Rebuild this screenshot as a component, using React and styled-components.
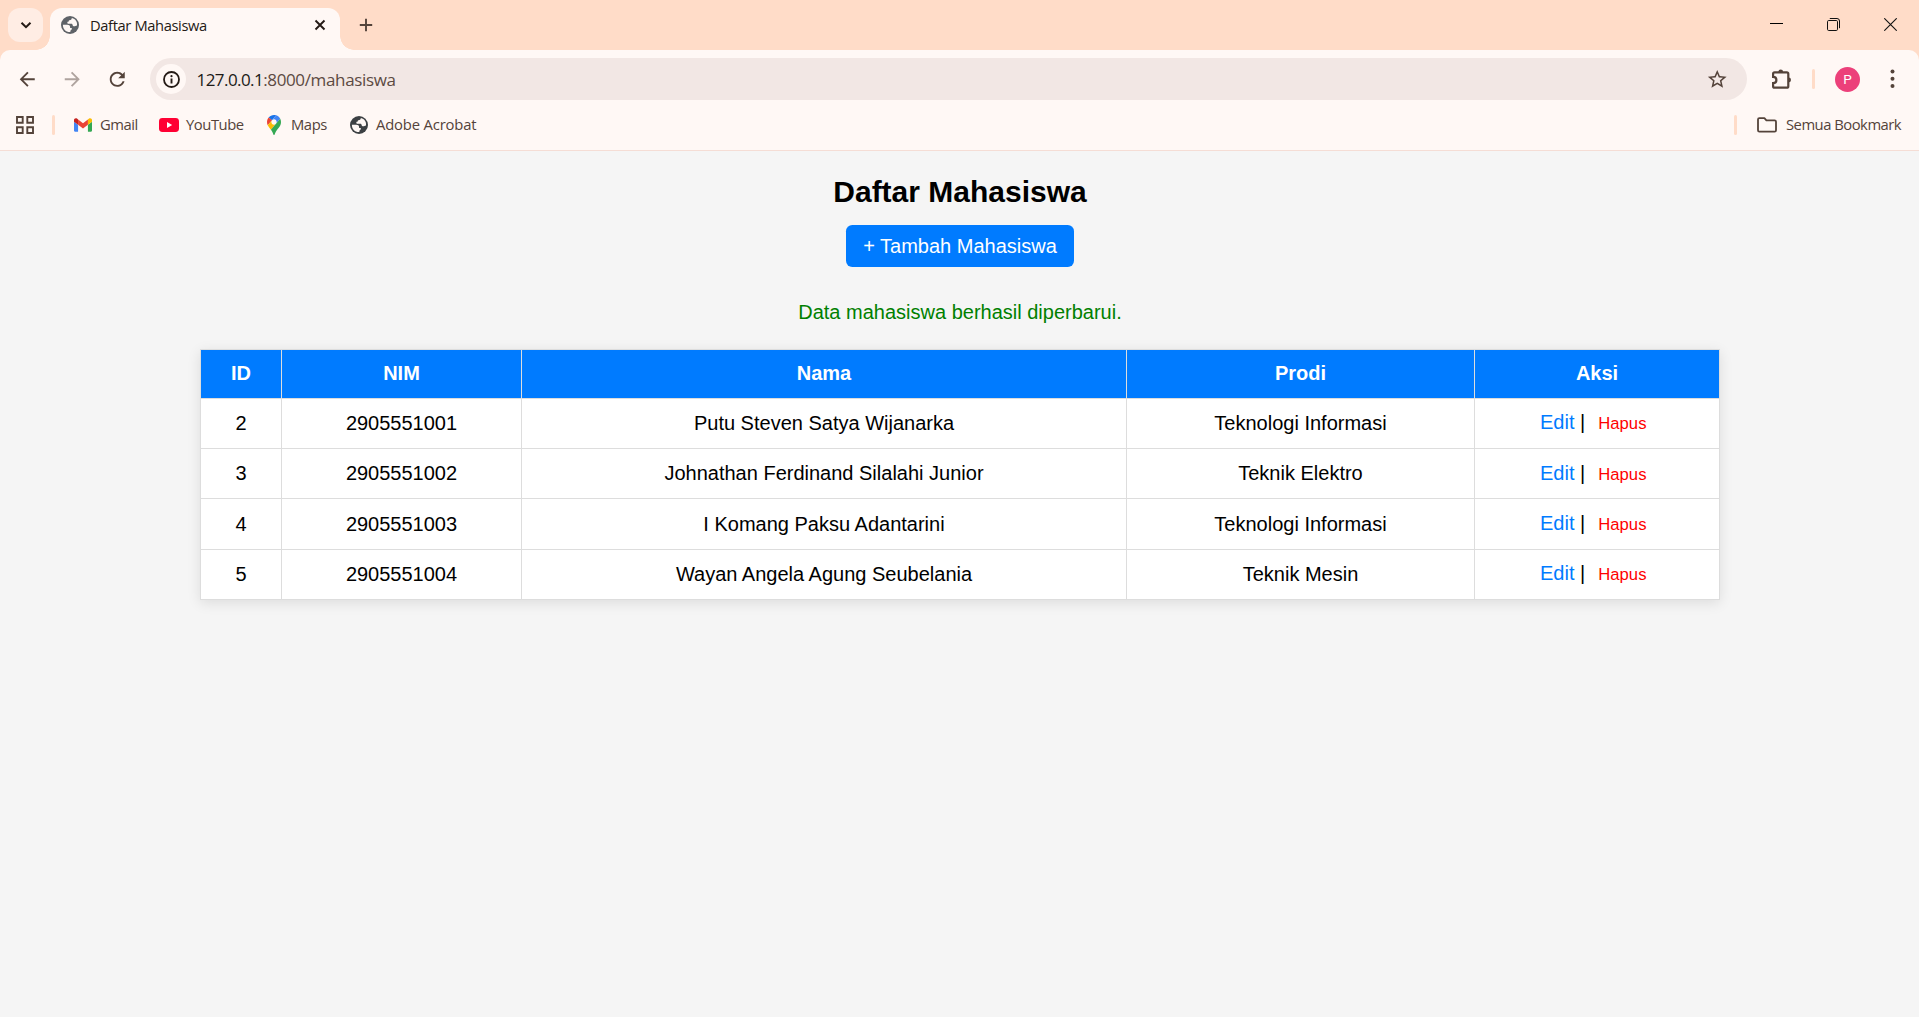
import React from "react";
import styled, { createGlobalStyle } from "styled-components";

const GlobalStyle = createGlobalStyle`
  * { box-sizing: border-box; }
  body {
    margin: 0;
    background: #f5f5f5;
    font-family: "Liberation Sans", Arial, sans-serif;
    overflow: hidden;
  }
  svg { display: block; flex: none; }
`;

const ui = `"Open Sans", "Noto Sans", sans-serif`;
const strip = "#ffdcc8";
const surface = "#fff8f5";
const ink = "#54433a";

const Window = styled.div`
  display: flex;
  flex-direction: column;
  height: 1017px;
  font-size: 20px;
`;

/* ---------- tab strip ---------- */
const TabStrip = styled.div`
  display: flex;
  align-items: flex-start;
  height: 50px;
  padding: 8px 0 0 8px;
  background: ${strip};
`;

const TabSearch = styled.div`
  display: flex;
  align-items: center;
  justify-content: center;
  width: 35px;
  height: 34px;
  border-radius: 12px;
  background: #ffede4;
`;

const Tab = styled.div`
  position: relative;
  display: flex;
  align-items: center;
  width: 290px;
  height: 42px;
  margin-left: 7px;
  padding: 0 12px 8px 10.5px;
  border-radius: 12px 12px 0 0;
  background: ${surface};

  &::before,
  &::after {
    content: "";
    position: absolute;
    bottom: 0;
    width: 14px;
    height: 14px;
  }
  &::before {
    left: -14px;
    background: radial-gradient(circle at 0 0, transparent 13.5px, ${surface} 14px);
  }
  &::after {
    right: -14px;
    background: radial-gradient(circle at 100% 0, transparent 13.5px, ${surface} 14px);
  }
`;

const TabTitle = styled.span`
  flex: 1;
  margin-left: 11.5px;
  font: 14.7px/20px ${ui};
  letter-spacing: -0.37px;
  color: #241a15;
  white-space: nowrap;
`;

const NewTab = styled.div`
  display: flex;
  align-items: center;
  height: 34px;
  margin-left: 18px;
`;

const WindowButtons = styled.div`
  display: flex;
  margin-left: auto;
`;

const WindowButton = styled.div`
  display: flex;
  align-items: center;
  justify-content: center;
  width: 57px;
  height: 33px;
`;

/* ---------- toolbar ---------- */
const ToolbarBacking = styled.div`
  background: ${strip};
`;

const Toolbar = styled.div`
  display: flex;
  align-items: center;
  height: 58px;
  padding: 0 15px 0 5px;
  border-radius: 10px 10px 0 0;
  background: ${surface};
`;

const NavButton = styled.div`
  display: flex;
  align-items: center;
  justify-content: center;
  width: 45px;
  height: 42px;
`;

const AddressBar = styled.div`
  display: flex;
  align-items: center;
  flex: 1;
  height: 42px;
  margin-left: 10px;
  padding: 0 18.5px 0 6px;
  border-radius: 21px;
  background: #f2e7e4;
`;

const SiteInfo = styled.div`
  display: flex;
  align-items: center;
  justify-content: center;
  width: 30px;
  height: 30px;
  border-radius: 50%;
  background: ${surface};
`;

const Url = styled.span`
  flex: 1;
  margin-left: 10.5px;
  padding-top: 2px;
  font: 17px/24px ${ui};
  letter-spacing: -0.36px;
  color: #5c4a42;
  white-space: nowrap;
`;

const Host = styled.span`
  letter-spacing: -0.56px;
  color: #201a17;
`;

const ToolbarActions = styled.div`
  display: flex;
  align-items: center;
  width: 157px;
  padding-left: 23px;
`;

const Divider = styled.div`
  width: ${(p) => p.$width}px;
  height: 20px;
  margin: 0 ${(p) => p.$after}px 0 ${(p) => p.$before}px;
  border-radius: 2px;
  background: ${strip};
`;

const Avatar = styled.div`
  display: flex;
  align-items: center;
  justify-content: center;
  width: 25px;
  height: 25px;
  margin-right: 30px;
  border-radius: 50%;
  background: #ec407a;
  color: #fff;
  font: 13.5px/25px Roboto, sans-serif;
`;

/* ---------- bookmarks ---------- */
const BookmarkBar = styled.div`
  display: flex;
  align-items: center;
  height: 43px;
  padding: 0 16px 8px 15.5px;
  border-bottom: 1px solid #f5ddd5;
  background: ${surface};
`;

const Bookmark = styled.div`
  display: flex;
  align-items: center;
  gap: ${(p) => p.$gap ?? 7.5}px;
  width: ${(p) => (p.$width ? `${p.$width}px` : "auto")};
`;

const BookmarkIcon = styled.span`
  display: flex;
  justify-content: center;
  width: 20px;
`;

const BookmarkLabel = styled.span`
  padding-bottom: 3px;
  font: 14.8px/20px ${ui};
  letter-spacing: ${(p) => p.$tracking ?? -0.45}px;
  color: ${ink};
  white-space: nowrap;
`;

const Spacer = styled.div`
  flex: 1;
`;

/* ---------- page ---------- */
const Page = styled.main`
  display: flex;
  flex-direction: column;
  align-items: center;
  flex: 1;
  padding: 24px 0 0 1px;
  background: #f5f5f5;
`;

const Title = styled.h2`
  margin: 0;
  font-size: 30px;
  line-height: 34px;
`;

const AddLink = styled.a`
  display: flex;
  align-items: center;
  justify-content: center;
  width: 228px;
  height: 42px;
  margin-top: 16px;
  border-radius: 6.25px;
  background: #007bff;
  color: #fff;
`;

const Message = styled.p`
  margin: 34px 0 25px;
  line-height: 23px;
  color: green;
`;

const Table = styled.table`
  width: 1520px;
  table-layout: fixed;
  border-collapse: collapse;
  background: #fff;
  box-shadow: 0 2.5px 12.5px rgba(0, 0, 0, 0.1);
`;

const Col = styled.col`
  width: ${(p) => p.$width}px;
`;

const Row = styled.tr`
  height: ${(p) => p.$height ?? 50}px;
`;

const HeadCell = styled.th`
  padding: 0 0 2px;
  border: 1px solid #ddd;
  background: #007bff;
  color: #fff;
  line-height: 23px;
  text-align: center;
`;

const Cell = styled.td`
  padding: 0;
  border: 1px solid #ddd;
  line-height: 23px;
  text-align: center;
`;

const ActionCell = styled(Cell)`
  padding-bottom: ${(p) => p.$lift ?? 2}px;
`;

const EditLink = styled.a`
  color: #007bff;
`;

const DeleteButton = styled.button`
  padding: 0 7.5px;
  border: none;
  background: none;
  color: red;
  font: 16.67px/19px "Liberation Sans", Arial, sans-serif;
`;

/* ---------- icons ---------- */
const Globe = ({ color }) => (
  <svg width="18" height="18" viewBox="0 0 18 18">
    <circle cx="9" cy="9" r="9" fill={color} />
    <path
      d="M1.9 8.7h4.300c1.800 0 2.900.8 2.900 2.300v1h1.700v1.500c-.9.2-1.400.7-1.500 2.600-4.100.3-7.500-2.900-7.400-7.400z"
      fill={surface}
    />
    <path
      d="M10.900 2.100c-.4 1.600-1 2.100-2.300 2.200-.6 0-.9.5-.9 1.200-.9.100-1.400.5-1.400 1.200 0 .8.600 1 1.500 1h2.400c.9 0 1.300.5 1.400 1.300.1.900.7 1.300 1.700 1.300.9 0 1.300-.9 2.700-.9.5-3.600-1.500-6.400-5.100-7.300z"
      fill={surface}
    />
  </svg>
);

const Material = ({ d, size = 22.5, color = ink }) => (
  <svg width={size} height={size} viewBox="0 0 24 24" fill={color}>
    <path d={d} />
  </svg>
);

const BACK = "M20 11H7.830l5.590-5.590L12 4l-8 8 8 8 1.410-1.410L7.830 13H20v-2z";
const FORWARD = "M12 4l-1.410 1.410L16.170 11H4v2h12.170l-5.580 5.590L12 20l8-8z";
const RELOAD =
  "M17.650 6.350C16.200 4.900 14.210 4 12 4c-4.420 0-7.990 3.580-7.990 8s3.570 8 7.990 8c3.730 0 6.840-2.550 7.730-6h-2.080c-.82 2.330-3.040 4-5.650 4-3.310 0-6-2.690-6-6s2.690-6 6-6c1.660 0 3.140.690 4.220 1.780L13 11h7V4l-2.350 2.350z";
const STAR =
  "M22 9.240l-7.190-.620L12 2 9.190 8.630 2 9.240l5.460 4.730L5.820 21 12 17.270 18.180 21l-1.630-7.030L22 9.240zM12 15.400l-3.760 2.270 1-4.280-3.320-2.880 4.380-.380L12 6.100l1.710 4.040 4.380.380-3.320 2.880 1 4.280L12 15.400z";

const Chevron = () => (
  <svg width="12" height="12" viewBox="0 0 12 12" fill="none" stroke="#241a15" strokeWidth="2">
    <path d="M1.500 3.700L6 8.200l4.500-4.500" />
  </svg>
);

const TabClose = () => (
  <svg width="16" height="16" viewBox="0 0 16 16" stroke="#241a15" strokeWidth="1.900">
    <path d="M3.500 3.500l9 9M12.500 3.500l-9 9" />
  </svg>
);

const Plus = () => (
  <svg width="16" height="16" viewBox="0 0 16 16" stroke={ink} strokeWidth="1.900">
    <path d="M8 1.800v12.400M1.800 8h12.400" />
  </svg>
);

const Minimize = () => (
  <svg width="13" height="13" viewBox="0 0 13 13" stroke="#000">
    <path d="M0 5.500h13" />
  </svg>
);

const Restore = () => (
  <svg width="13" height="13" viewBox="0 0 13 13" fill="none" stroke="#111">
    <rect x=".5" y="2.500" width="10" height="10" rx="1.200" />
    <path d="M2.800.5h7.200a2.500 2.500 0 0 1 2.500 2.500v7.200" />
  </svg>
);

const WindowClose = () => (
  <svg width="13" height="13" viewBox="0 0 13 13" stroke="#111" strokeWidth="1.100">
    <path d="M.3.300l12.400 12.400M12.700.300L.3 12.700" />
  </svg>
);

const Info = () => (
  <svg width="17" height="17" viewBox="0 0 17 17">
    <circle cx="8.500" cy="8.500" r="7.500" fill="none" stroke="#241a15" strokeWidth="1.800" />
    <path d="M8.500 7.500v5" stroke="#241a15" strokeWidth="1.900" />
    <circle cx="8.500" cy="5.200" r="1.100" fill="#241a15" />
  </svg>
);

const Puzzle = () => (
  <svg width="24" height="24" viewBox="0 0 24 24">
    <path
      d="M4.600 5.300h12.200c.9 0 1.500.6 1.500 1.500v12.400c0 .9-.6 1.500-1.500 1.500H4.600c-.9 0-1.500-.6-1.500-1.500v-3c1.900 0 3.300-1.300 3.300-3.200S5 9.800 3.100 9.800v-3c0-.9.600-1.500 1.500-1.500z"
      fill="none"
      stroke={ink}
      strokeWidth="2.200"
    />
    <path d="M8.300 5a2.400 2.400 0 0 1 4.800 0zM18.600 10.600a2.400 2.400 0 0 1 0 4.800z" fill={ink} />
  </svg>
);

const Dots = () => (
  <svg width="5" height="20" viewBox="0 0 5 20" fill={ink}>
    <circle cx="2.500" cy="2.500" r="2" />
    <circle cx="2.500" cy="9.700" r="2" />
    <circle cx="2.500" cy="16.900" r="2" />
  </svg>
);

const Apps = () => (
  <svg width="18" height="18" viewBox="0 0 18 18" fill="none" stroke={ink} strokeWidth="1.900">
    <path d="M1 1h5.700v5.700H1zM11.300 1H17v5.700h-5.700zM1 11.300h5.700V17H1zM11.300 11.300H17V17h-5.700z" />
  </svg>
);

const Folder = () => (
  <svg width="20" height="16" viewBox="0 0 20 16" fill="none" stroke={ink} strokeWidth="1.800">
    <path
      d="M2.400 1.200h5l2 2.200h8.200c.9 0 1.400.6 1.400 1.400v8.400c0 .9-.6 1.400-1.400 1.400H2.400c-.9 0-1.400-.6-1.400-1.400V2.600c0-.9.6-1.400 1.400-1.400z"
      strokeLinejoin="round"
    />
  </svg>
);

const Gmail = () => (
  <svg width="18" height="14" viewBox="52 42 88 66">
    <path fill="#4285f4" d="M58 108h14V74L52 59v43c0 3.320 2.690 6 6 6" />
    <path fill="#34a853" d="M120 108h14c3.320 0 6-2.690 6-6V59l-20 15" />
    <path fill="#fbbc04" d="M120 48v26l20-15v-8c0-7.420-8.470-11.650-14.400-7.200" />
    <path fill="#ea4335" d="M72 74V48l24 18 24-18v26L96 92" />
    <path fill="#c5221f" d="M52 51v8l20 15V48l-5.600-4.200c-5.940-4.450-14.400-.220-14.400 7.200" />
  </svg>
);

const YouTube = () => (
  <svg width="20" height="14" viewBox="0 0 20 14">
    <rect width="20" height="14" rx="3.400" fill="#ff0033" />
    <path d="M8 4l5.200 3L8 10z" fill="#fff" />
  </svg>
);

const Maps = () => (
  <svg width="14" height="20" viewBox="0 0 92.300 132.300">
    <path fill="#1a73e8" d="M60.200 2.200C55.800.8 51 0 46.100 0 32 0 19.300 6.400 10.800 16.500l21.800 18.300L60.200 2.200z" />
    <path fill="#ea4335" d="M10.800 16.500C4.100 24.500 0 34.900 0 46.100c0 8.700 1.700 15.700 4.600 22l28-33.300-21.800-18.300z" />
    <path fill="#4285f4" d="M46.200 28.500c9.800 0 17.700 7.900 17.700 17.700 0 4.300-1.600 8.300-4.200 11.400 0 0 13.900-16.600 27.500-32.700-5.600-10.800-15.300-19-27-22.700L32.600 34.800c3.300-3.800 8.100-6.300 13.600-6.300" />
    <path fill="#fbbc04" d="M46.200 63.800c-9.800 0-17.700-7.900-17.700-17.700 0-4.300 1.500-8.300 4.100-11.300l-28 33.300c4.800 10.600 12.800 19.200 21 29.900l34.100-40.500c-3.300 3.900-8.100 6.300-13.500 6.300" />
    <path fill="#34a853" d="M59.100 109.200c15.400-24.100 33.300-35 33.300-63 0-7.700-1.900-14.900-5.200-21.300L25.600 98c2.600 3.400 5.300 7.300 7.900 11.300 9.400 14.500 6.800 23.100 12.800 23.100s3.400-8.700 12.800-23.200" />
  </svg>
);

const bookmarks = [
  { label: "Gmail", icon: <Gmail />, width: 86 },
  { label: "YouTube", icon: <YouTube />, width: 105 },
  { label: "Maps", icon: <Maps />, width: 85 },
  { label: "Adobe Acrobat", icon: <Globe color="#3c4043" />, tracking: -0.16 },
];

const columns = [
  ["ID", 81],
  ["NIM", 240],
  ["Nama", 605],
  ["Prodi", 348],
  ["Aksi", 245],
];

const students = [
  { id: 2, nim: "2905551001", name: "Putu Steven Satya Wijanarka", major: "Teknologi Informasi" },
  { id: 3, nim: "2905551002", name: "Johnathan Ferdinand Silalahi Junior", major: "Teknik Elektro", lift: 0 },
  { id: 4, nim: "2905551003", name: "I Komang Paksu Adantarini", major: "Teknologi Informasi", height: 51 },
  { id: 5, nim: "2905551004", name: "Wayan Angela Agung Seubelania", major: "Teknik Mesin" },
];

export default function App() {
  return (
    <Window>
      <GlobalStyle />
      <TabStrip>
        <TabSearch><Chevron /></TabSearch>
        <Tab>
          <Globe color="#5f6368" />
          <TabTitle>Daftar Mahasiswa</TabTitle>
          <TabClose />
        </Tab>
        <NewTab><Plus /></NewTab>
        <WindowButtons>
          <WindowButton><Minimize /></WindowButton>
          <WindowButton><Restore /></WindowButton>
          <WindowButton><WindowClose /></WindowButton>
        </WindowButtons>
      </TabStrip>

      <ToolbarBacking>
        <Toolbar>
          <NavButton><Material d={BACK} /></NavButton>
          <NavButton><Material d={FORWARD} color="#afa39e" /></NavButton>
          <NavButton><Material d={RELOAD} /></NavButton>
          <AddressBar>
            <SiteInfo><Info /></SiteInfo>
            <Url><Host>127.0.0.1</Host>:8000/mahasiswa</Url>
            <Material d={STAR} />
          </AddressBar>
          <ToolbarActions>
            <Puzzle />
            <Divider $width={3} $before={18} $after={20} />
            <Avatar>P</Avatar>
            <Dots />
          </ToolbarActions>
        </Toolbar>
      </ToolbarBacking>

      <BookmarkBar>
        <Apps />
        <Divider $width={3} $before={18} $after={18} />
        {bookmarks.map((b) => (
          <Bookmark key={b.label} $width={b.width}>
            <BookmarkIcon>{b.icon}</BookmarkIcon>
            <BookmarkLabel $tracking={b.tracking}>{b.label}</BookmarkLabel>
          </Bookmark>
        ))}
        <Spacer />
        <Divider $width={3} $before={0} $after={19.5} />
        <Bookmark $width={146.5} $gap={9.5}>
          <BookmarkIcon><Folder /></BookmarkIcon>
          <BookmarkLabel $tracking={-0.5}>Semua Bookmark</BookmarkLabel>
        </Bookmark>
      </BookmarkBar>

      <Page>
        <Title>Daftar Mahasiswa</Title>
        <AddLink>+ Tambah Mahasiswa</AddLink>
        <Message>Data mahasiswa berhasil diperbarui.</Message>
        <Table>
          <colgroup>
            {columns.map(([name, width]) => <Col key={name} $width={width} />)}
          </colgroup>
          <thead>
            <Row $height={49}>
              {columns.map(([name]) => <HeadCell key={name}>{name}</HeadCell>)}
            </Row>
          </thead>
          <tbody>
            {students.map((s) => (
              <Row key={s.id} $height={s.height}>
                <Cell>{s.id}</Cell>
                <Cell>{s.nim}</Cell>
                <Cell>{s.name}</Cell>
                <Cell>{s.major}</Cell>
                <ActionCell $lift={s.lift}>
                  <EditLink>Edit</EditLink> | <DeleteButton>Hapus</DeleteButton>
                </ActionCell>
              </Row>
            ))}
          </tbody>
        </Table>
      </Page>
    </Window>
  );
}
